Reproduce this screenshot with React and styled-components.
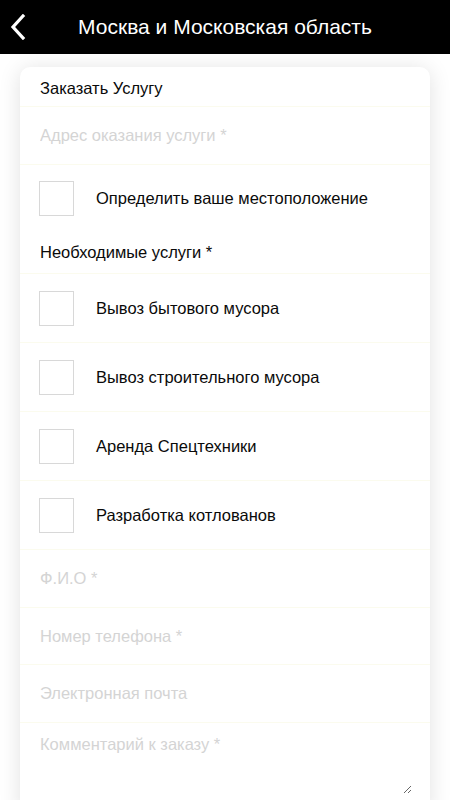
import React from 'react';
import styled, { createGlobalStyle } from 'styled-components';

const GlobalStyle = createGlobalStyle`
  body {
    margin: 0;
    background: #ffffff;
    font-family: "Liberation Sans", Arial, sans-serif;
  }
`;

const Header = styled.div`
  height: 54px;
  background: #000000;
  display: flex;
  align-items: center;
  position: relative;
`;

const BackButton = styled.button`
  position: absolute;
  left: 6px;
  top: 11px;
  width: 24px;
  height: 32px;
  padding: 0;
  border: none;
  background: none;
  display: flex;
  align-items: center;
  justify-content: center;
`;

const HeaderTitle = styled.h1`
  margin: 0;
  flex: 1;
  text-align: center;
  color: #ffffff;
  font-size: 21px;
  font-weight: normal;
`;

const Card = styled.form`
  margin: 13px 20px 0;
  background: #ffffff;
  border-radius: 10px;
  box-shadow: 0 2px 22px rgba(0, 0, 0, 0.12);
  display: flex;
  flex-direction: column;
  padding-bottom: 20px;
`;

const Row = styled.div`
  display: flex;
  align-items: center;
  padding: 0 20px;
  height: ${p => p.$height || 57}px;
  border-bottom: ${p => (p.$noBorder ? 'none' : '1px solid #fbfbee')};
`;

const Label = styled.div`
  font-size: 16.5px;
  color: #0a0a0a;
  padding-top: ${p => p.$top || 0}px;
`;

const Field = styled.input`
  width: 100%;
  border: none;
  outline: none;
  padding: 0;
  font-family: "Liberation Sans", Arial, sans-serif;
  font-size: 16.5px;
  color: #0a0a0a;
  background: transparent;
  &::placeholder {
    color: #d4d4d4;
  }
`;

const Comment = styled.textarea`
  display: block;
  margin: 0 20px;
  padding: 12px 0 0;
  width: calc(100% - 38px);
  height: 71px;
  box-sizing: border-box;
  border: none;
  outline: none;
  font-family: "Liberation Sans", Arial, sans-serif;
  font-size: 16.5px;
  background: transparent;
  &::placeholder {
    color: #d4d4d4;
  }
`;

const CheckRow = styled.label`
  display: flex;
  align-items: center;
  gap: 22px;
  padding: 0 19px;
  height: ${p => p.$height || 68}px;
  border-bottom: ${p => (p.$noBorder ? 'none' : '1px solid #fbfbee')};
`;

const Box = styled.span`
  width: 33px;
  height: 33px;
  flex: none;
  border: 1px solid #d8d8d8;
  background: #ffffff;
`;

const CheckText = styled.span`
  font-size: 16.5px;
  color: #0a0a0a;
`;

const services = [
  'Вывоз бытового мусора',
  'Вывоз строительного мусора',
  'Аренда Спецтехники',
  'Разработка котлованов',
];

export default function App() {
  return (
    <>
      <GlobalStyle />
      <Header>
        <BackButton type="button" aria-label="Назад">
          <svg width="18" height="26" viewBox="0 0 18 26">
            <path d="M14 2 L4 13 L14 24" fill="none" stroke="#fff" strokeWidth="3.2" strokeLinecap="square" />
          </svg>
        </BackButton>
        <HeaderTitle>Москва и Московская область</HeaderTitle>
      </Header>
      <Card>
        <Row $height={39}>
          <Label $top={3}>Заказать Услугу</Label>
        </Row>
        <Row $height={57}>
          <Field placeholder="Адрес оказания услуги *" />
        </Row>
        <CheckRow $height={66} $noBorder>
          <Box />
          <CheckText>Определить ваше местоположение</CheckText>
        </CheckRow>
        <Row $height={42}>
          <Label>Необходимые услуги *</Label>
        </Row>
        {services.map(s => (
          <CheckRow key={s}>
            <Box />
            <CheckText>{s}</CheckText>
          </CheckRow>
        ))}
        <Row $height={57}>
          <Field placeholder="Ф.И.О *" />
        </Row>
        <Row $height={56}>
          <Field placeholder="Номер телефона *" />
        </Row>
        <Row $height={57}>
          <Field placeholder="Электронная почта" />
        </Row>
        <Comment placeholder="Комментарий к заказу *" />
      </Card>
    </>
  );
}
